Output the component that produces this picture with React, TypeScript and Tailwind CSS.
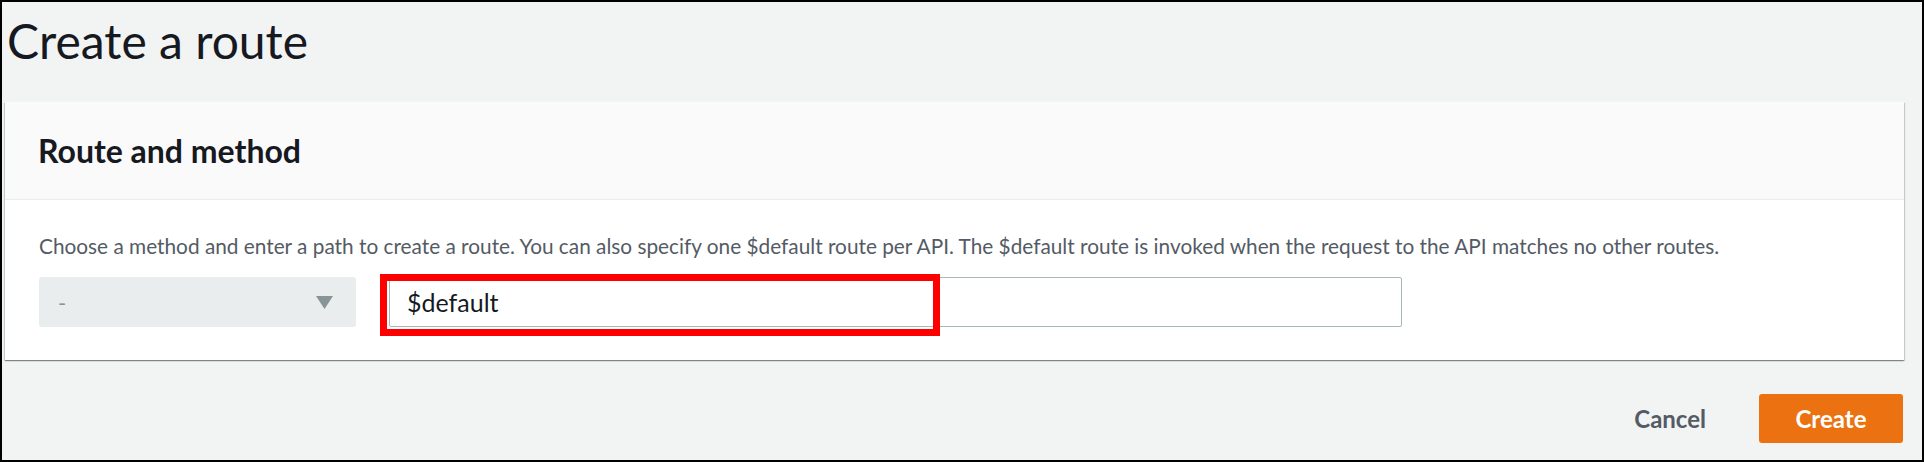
const DESCRIPTION =
  'Choose a method and enter a path to create a route. You can also specify one $default route per API. The $default route is invoked when the request to the API matches no other routes.';

function MethodSelect() {
  return (
    <div className="flex h-[50px] w-[317px] shrink-0 items-center justify-between rounded-[3px] bg-[#eaeded] pl-[19px] pr-[23px]">
      <span className="text-[22px] text-[#879596]">-</span>
      <svg width="17" height="13" viewBox="0 0 17 13" aria-hidden="true">
        <path d="M0 0h17L8.5 13z" fill="#879596" />
      </svg>
    </div>
  );
}

function PathInput() {
  return (
    <div className="relative w-[1013px]">
      <input
        readOnly
        value="$default"
        className="h-[50px] w-full rounded-[2px] border border-[#aab7b8] bg-white px-[17px] text-[25px] text-[#16191f] outline-none"
      />
      {/* red highlight drawn over the field */}
      <div className="pointer-events-none absolute left-[-9px] top-[-3px] h-[62px] w-[560px] border-[7px] border-[#ff0000]" />
    </div>
  );
}

export default function App() {
  return (
    <div className="flex h-[462px] w-[1924px] flex-col border-2 border-black bg-[#f2f3f3] font-['Lato',sans-serif] text-[#16191f]">
      <h1 className="pl-[5px] pt-[10px] text-[48px] font-normal leading-[58px]">Create a route</h1>

      <section className="ml-[3px] mr-[18px] mt-[32px] bg-white shadow-[0_1px_1px_0_rgba(0,28,36,0.3),1px_1px_1px_0_rgba(0,28,36,0.15),-1px_1px_1px_0_rgba(0,28,36,0.15)]">
        <div className="flex h-[98px] items-center border-b border-[#eaeded] bg-[#fafafa] pl-[33px]">
          <h2 className="text-[32px] font-bold leading-[38px]">Route and method</h2>
        </div>
        <div className="px-[34px] pb-[33px] pt-[34px]">
          <p className="text-[20.8px] leading-[24px] text-[#545b64]">{DESCRIPTION}</p>
          <div className="mt-[19px] flex items-start gap-[33px]">
            <MethodSelect />
            <PathInput />
          </div>
        </div>
      </section>

      <div className="mr-[19px] mt-[34px] flex items-center justify-end">
        <button type="button" className="h-[49px] px-[22px] text-[24px] font-bold text-[#545b64]">
          Cancel
        </button>
        <button
          type="button"
          className="ml-[31px] h-[49px] w-[144px] rounded-[3px] bg-[#ec7211] text-[24px] font-bold text-white"
        >
          Create
        </button>
      </div>
    </div>
  );
}
